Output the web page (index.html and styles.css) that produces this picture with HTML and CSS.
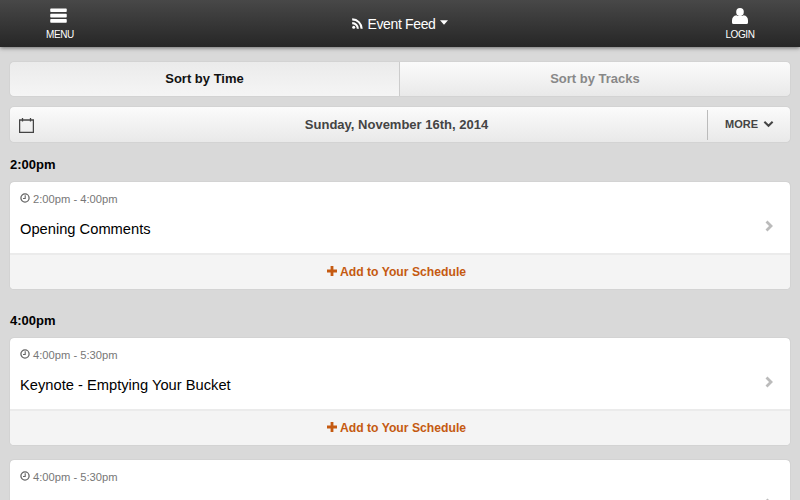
FILE: index.html
```html
<!DOCTYPE html>
<html lang="en">
<head>
<meta charset="utf-8">
<title>Event Feed</title>
<link rel="stylesheet" href="styles.css">
</head>
<body>
<header class="topbar">
  <a class="nav-btn">
    <svg class="nav-icon menu" viewBox="0 0 18 16"><path d="M1 .5h16a.8.8 0 0 1 .8.8v2.2a.8.8 0 0 1-.8.8H1a.8.8 0 0 1-.8-.8V1.300a.8.8 0 0 1 .8-.8zM1 6.200h16a.8.8 0 0 1 .8.8v2.200a.8.8 0 0 1-.8.8H1a.8.8 0 0 1-.8-.8V7a.8.8 0 0 1 .8-.8zM1 11.800h16a.8.8 0 0 1 .8.8v2.200a.8.8 0 0 1-.8.8H1a.8.8 0 0 1-.8-.8v-2.200a.8.8 0 0 1 .8-.8z" fill="#fff"/></svg>
    <span>MENU</span>
  </a>
  <div class="title">
    <svg class="rss" viewBox="0 0 11 11"><circle cx="1.700" cy="9.300" r="1.500" fill="#fff"/><path d="M.2 4.100a6.700 6.700 0 0 1 6.700 6.700H4.800A4.600 4.600 0 0 0 .2 6.200zM.2.300a10.500 10.500 0 0 1 10.500 10.500H8.600A8.400 8.400 0 0 0 .2 2.400z" fill="#fff"/></svg>
    <span>Event Feed</span>
    <svg class="caret" viewBox="0 0 9 5"><path d="M0 0h9L4.500 5z" fill="#fff"/></svg>
  </div>
  <a class="nav-btn">
    <svg class="nav-icon user" viewBox="0 0 16 16"><ellipse cx="8" cy="4" rx="3.800" ry="4" fill="#fff"/><path d="M4.500 7.200C5.500 8.400 10.500 8.400 11.500 7.200 14.500 7.500 16 9.500 16 12.500V14.500a1.500 1.500 0 0 1-1.500 1.500h-13A1.500 1.500 0 0 1 0 14.500V12.500C0 9.500 1.500 7.500 4.500 7.200z" fill="#fff"/></svg>
    <span>LOGIN</span>
  </a>
</header>
<main class="content">
  <div class="segments">
    <div class="segment active">Sort by Time</div>
    <div class="segment">Sort by Tracks</div>
  </div>
  <div class="datebar">
    <svg class="cal" viewBox="0 0 15 16"><path d="M.6 3h13.800v12.400H.6zM3.500 1v3.500M11.500 1v3.500" fill="none" stroke="#444" stroke-width="1.300"/></svg>
    <div class="date">Sunday, November 16th, 2014</div>
    <div class="more">MORE
      <svg class="chev" viewBox="0 0 12 8"><path d="M1.500 1.500 6 6l4.500-4.500" fill="none" stroke="#444" stroke-width="2.200"/></svg>
    </div>
  </div>

  <h2 class="slot">2:00pm</h2>
  <article class="card">
    <div class="body">
      <div class="info">
        <div class="time"><svg class="clock" viewBox="0 0 10 10"><circle cx="5" cy="5" r="4.100" fill="none" stroke="#666" stroke-width="1.300"/><path d="M5.200 2.300V5.500H3" fill="none" stroke="#666" stroke-width="1.100"/></svg>2:00pm - 4:00pm</div>
        <div class="name">Opening Comments</div>
      </div>
      <svg class="arrow" viewBox="0 0 8 12"><path d="M1.500 1.500 6 6l-4.500 4.500" fill="none" stroke="#bbb" stroke-width="2.800"/></svg>
    </div>
    <div class="add"><svg class="plus" viewBox="0 0 10 10"><path d="M3.600 0h2.800v3.600H10v2.800H6.400V10H3.600V6.400H0V3.600h3.600z" fill="#c55a11"/></svg>Add to Your Schedule</div>
  </article>

  <h2 class="slot">4:00pm</h2>
  <article class="card">
    <div class="body">
      <div class="info">
        <div class="time"><svg class="clock" viewBox="0 0 10 10"><circle cx="5" cy="5" r="4.100" fill="none" stroke="#666" stroke-width="1.300"/><path d="M5.200 2.300V5.500H3" fill="none" stroke="#666" stroke-width="1.100"/></svg>4:00pm - 5:30pm</div>
        <div class="name">Keynote - Emptying Your Bucket</div>
      </div>
      <svg class="arrow" viewBox="0 0 8 12"><path d="M1.500 1.500 6 6l-4.500 4.500" fill="none" stroke="#bbb" stroke-width="2.800"/></svg>
    </div>
    <div class="add"><svg class="plus" viewBox="0 0 10 10"><path d="M3.600 0h2.800v3.600H10v2.800H6.400V10H3.600V6.400H0V3.600h3.600z" fill="#c55a11"/></svg>Add to Your Schedule</div>
  </article>

  <article class="card next">
    <div class="body">
      <div class="info">
        <div class="time"><svg class="clock" viewBox="0 0 10 10"><circle cx="5" cy="5" r="4.100" fill="none" stroke="#666" stroke-width="1.300"/><path d="M5.200 2.300V5.500H3" fill="none" stroke="#666" stroke-width="1.100"/></svg>4:00pm - 5:30pm</div>
        <div class="name">&nbsp;</div>
      </div>
      <svg class="arrow" viewBox="0 0 8 12"><path d="M1.500 1.500 6 6l-4.500 4.500" fill="none" stroke="#bbb" stroke-width="2.800"/></svg>
    </div>
  </article>
</main>
</body>
</html>
```
FILE: styles.css
```css
* { box-sizing: border-box; }
html, body { margin: 0; height: 100%; overflow: hidden; }
body {
  background: #d9d9d9;
  font-family: "Liberation Sans", Arial, sans-serif;
  color: #000;
}
.topbar {
  height: 47px;
  display: flex;
  align-items: center;
  justify-content: space-between;
  padding: 0 40px 0 20px;
  background: linear-gradient(#484848, #262626);
  box-shadow: 0 1px 4px rgba(0, 0, 0, .5);
  color: #fff;
}
.nav-btn {
  width: 80px;
  display: flex;
  flex-direction: column;
  align-items: center;
  font-size: 10px;
  letter-spacing: -.4px;
  line-height: 12px;
  gap: 6px;
  padding-top: 1px;
}
.nav-btn:last-child { width: 40px; }
.nav-icon { width: 17px; height: 15px; display: block; }
.nav-icon.menu { margin-left: -3px; }
.nav-icon.user { width: 16px; height: 16px; margin-bottom: -1px; }
.title {
  display: flex;
  align-items: center;
  font-size: 14px;
  letter-spacing: -.35px;
  margin-left: -20px;
}
.rss { width: 11px; height: 11px; margin-right: 4px; }
.caret { width: 8px; height: 5px; margin-left: 4px; margin-bottom: 2px; }
.content { padding: 15px 10px 0; }
.segments {
  display: flex;
  height: 34px;
  border-radius: 4px;
  box-shadow: 0 0 1px rgba(0, 0, 0, .25);
  overflow: hidden;
}
.segment {
  flex: 1;
  display: flex;
  align-items: center;
  justify-content: center;
  padding-bottom: 2px;
  font-size: 13px;
  font-weight: bold;
  color: #888;
  background: linear-gradient(#fbfbfb, #e9e9e9);
}
.segment.active {
  flex: 0 0 390px;
  color: #111;
  background: linear-gradient(#ebebeb, #f5f5f5);
  border-right: 1px solid #ccc;
}
.datebar {
  display: flex;
  align-items: center;
  height: 35px;
  margin-top: 11px;
  padding-left: 9px;
  border-radius: 4px;
  background: linear-gradient(#fbfbfb, #e9e9e9);
  box-shadow: 0 0 1px rgba(0, 0, 0, .25);
}
.cal { width: 15px; height: 16px; }
.date {
  flex: 1;
  text-align: center;
  font-size: 13px;
  font-weight: bold;
  color: #444;
  padding-left: 52px;
  padding-bottom: 1px;
}
.more {
  width: 83px;
  height: 30px;
  display: flex;
  align-items: center;
  gap: 5px;
  padding-left: 17px;
  padding-bottom: 1px;
  border-left: 1px solid #bbb;
  font-size: 11px;
  font-weight: bold;
  color: #444;
}
.chev { width: 11px; height: 8px; }
.slot {
  margin: 0;
  height: 40px;
  padding-top: 15px;
  font-size: 13px;
  line-height: 16px;
  font-weight: bold;
}
.card {
  background: #fff;
  border-radius: 4px;
  box-shadow: 0 0 1px rgba(0, 0, 0, .25);
  margin-bottom: 15px;
  overflow: hidden;
  height: 107px;
}
.slot + .card { margin-bottom: 9px; }
.slot + .card + .slot + .card { margin-bottom: 15px; }
.body {
  height: 71px;
  display: flex;
  justify-content: space-between;
  padding: 0 17px 0 10px;
}
.info { flex: 1; padding-top: 10px; }
.time {
  display: flex;
  align-items: center;
  gap: 3px;
  font-size: 11.2px;
  line-height: 14px;
  color: #777;
}
.clock { width: 10px; height: 10px; margin-bottom: 2px; }
.name {
  margin-top: 14px;
  font-size: 14.7px;
  line-height: 18px;
}
.arrow { width: 8px; height: 12px; margin-top: 38px; }
.add {
  height: 36px;
  display: flex;
  align-items: center;
  justify-content: center;
  gap: 3px;
  padding-right: 7px;
  background: #f4f4f4;
  border-top: 2px solid #ebebeb;
  font-size: 12.2px;
  font-weight: bold;
  color: #c55a11;
}
.plus { width: 10px; height: 10px; margin-bottom: 2px; }
```
